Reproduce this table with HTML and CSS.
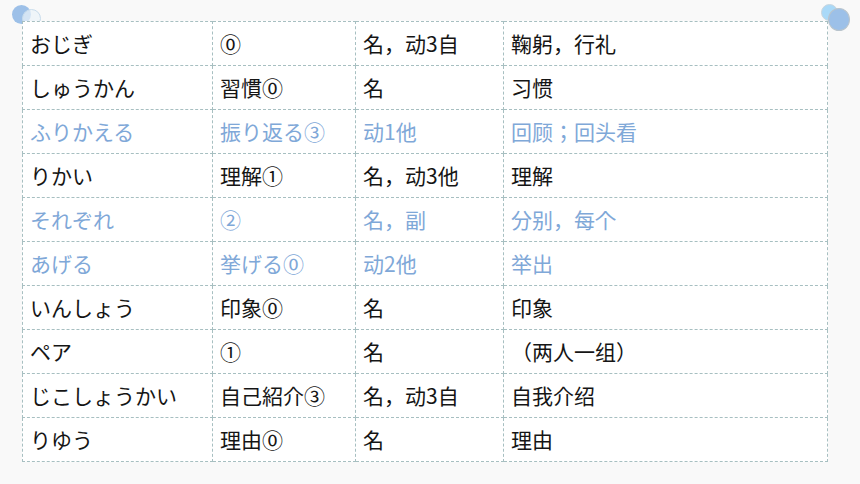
FILE: index.html
```html
<!DOCTYPE html>
<html lang="ja">
<head>
  <meta charset="UTF-8" />
  <meta name="viewport" content="width=device-width, initial-scale=1.0"/>
  <title>単語表</title>
  <link rel="stylesheet" href="styles.css">
</head>
<body>

  <!-- Decoración -->
  <div class="dot dot-tl"></div>
  <div class="ring ring-tl"></div>
  <div class="dot dot-tr-light"></div>
  <div class="dot dot-tr"></div>

  <table class="vocab">
    <colgroup>
      <col class="c1"><col class="c2"><col class="c3"><col class="c4">
    </colgroup>
    <tr><td>おじぎ</td><td>⓪</td><td>名，动3自</td><td>鞠躬，行礼</td></tr>
    <tr><td>しゅうかん</td><td>習慣⓪</td><td>名</td><td>习惯</td></tr>
    <tr class="blue"><td>ふりかえる</td><td>振り返る③</td><td>动1他</td><td>回顾；回头看</td></tr>
    <tr><td>りかい</td><td>理解①</td><td>名，动3他</td><td>理解</td></tr>
    <tr class="blue"><td>それぞれ</td><td>②</td><td>名，副</td><td>分别，每个</td></tr>
    <tr class="blue"><td>あげる</td><td>挙げる⓪</td><td>动2他</td><td>举出</td></tr>
    <tr><td>いんしょう</td><td>印象⓪</td><td>名</td><td>印象</td></tr>
    <tr><td>ペア</td><td>①</td><td>名</td><td>（两人一组）</td></tr>
    <tr><td>じこしょうかい</td><td>自己紹介③</td><td>名，动3自</td><td>自我介绍</td></tr>
    <tr><td>りゆう</td><td>理由⓪</td><td>名</td><td>理由</td></tr>
  </table>

</body>
</html>
```
FILE: styles.css
```css
/* Geral */
body {
  font-family: "Noto Sans CJK JP", "Noto Sans", sans-serif;
  background-color: #f9f9f9;
  margin: 0;
  padding: 21px 0 0 22px;
  height: 100vh;
  box-sizing: border-box;
  overflow: hidden;
}

/* Tabela */
.vocab {
  position: relative;
  z-index: 2;
  border-collapse: collapse;
  table-layout: fixed;
  width: 805px;
  background: #fff;
  font-size: 21px;
  color: #151515;
}

.vocab .c1 { width: 190px; }
.vocab .c2 { width: 143px; }
.vocab .c3 { width: 148px; }
.vocab .c4 { width: 324px; }

.vocab td {
  height: 43px;
  padding: 0 0 0 7px;
  border: 1px dashed #a7bfc1;
  white-space: nowrap;
  line-height: 1;
}

.vocab tr.blue td {
  color: #7fa8d8;
}

/* Bolinhas */
.dot, .ring {
  position: absolute;
  border-radius: 50%;
}

.dot-tl {
  left: 12px;
  top: 5px;
  width: 19px;
  height: 19px;
  background: #9dc0e8;
  z-index: 1;
}

.ring-tl {
  left: 22px;
  top: 9px;
  width: 17px;
  height: 17px;
  border: 1px solid #c8dcec;
  background: rgba(235, 243, 250, 0.7);
  z-index: 1;
}

.dot-tr-light {
  left: 821px;
  top: 4px;
  width: 15px;
  height: 15px;
  background: #a9d9f8;
  border: 1px solid #c9d6de;
  z-index: 3;
}

.dot-tr {
  left: 828px;
  top: 8px;
  width: 20px;
  height: 21px;
  background: #9cc0e8;
  border: 1px solid #b9c4cc;
  z-index: 4;
}
```
